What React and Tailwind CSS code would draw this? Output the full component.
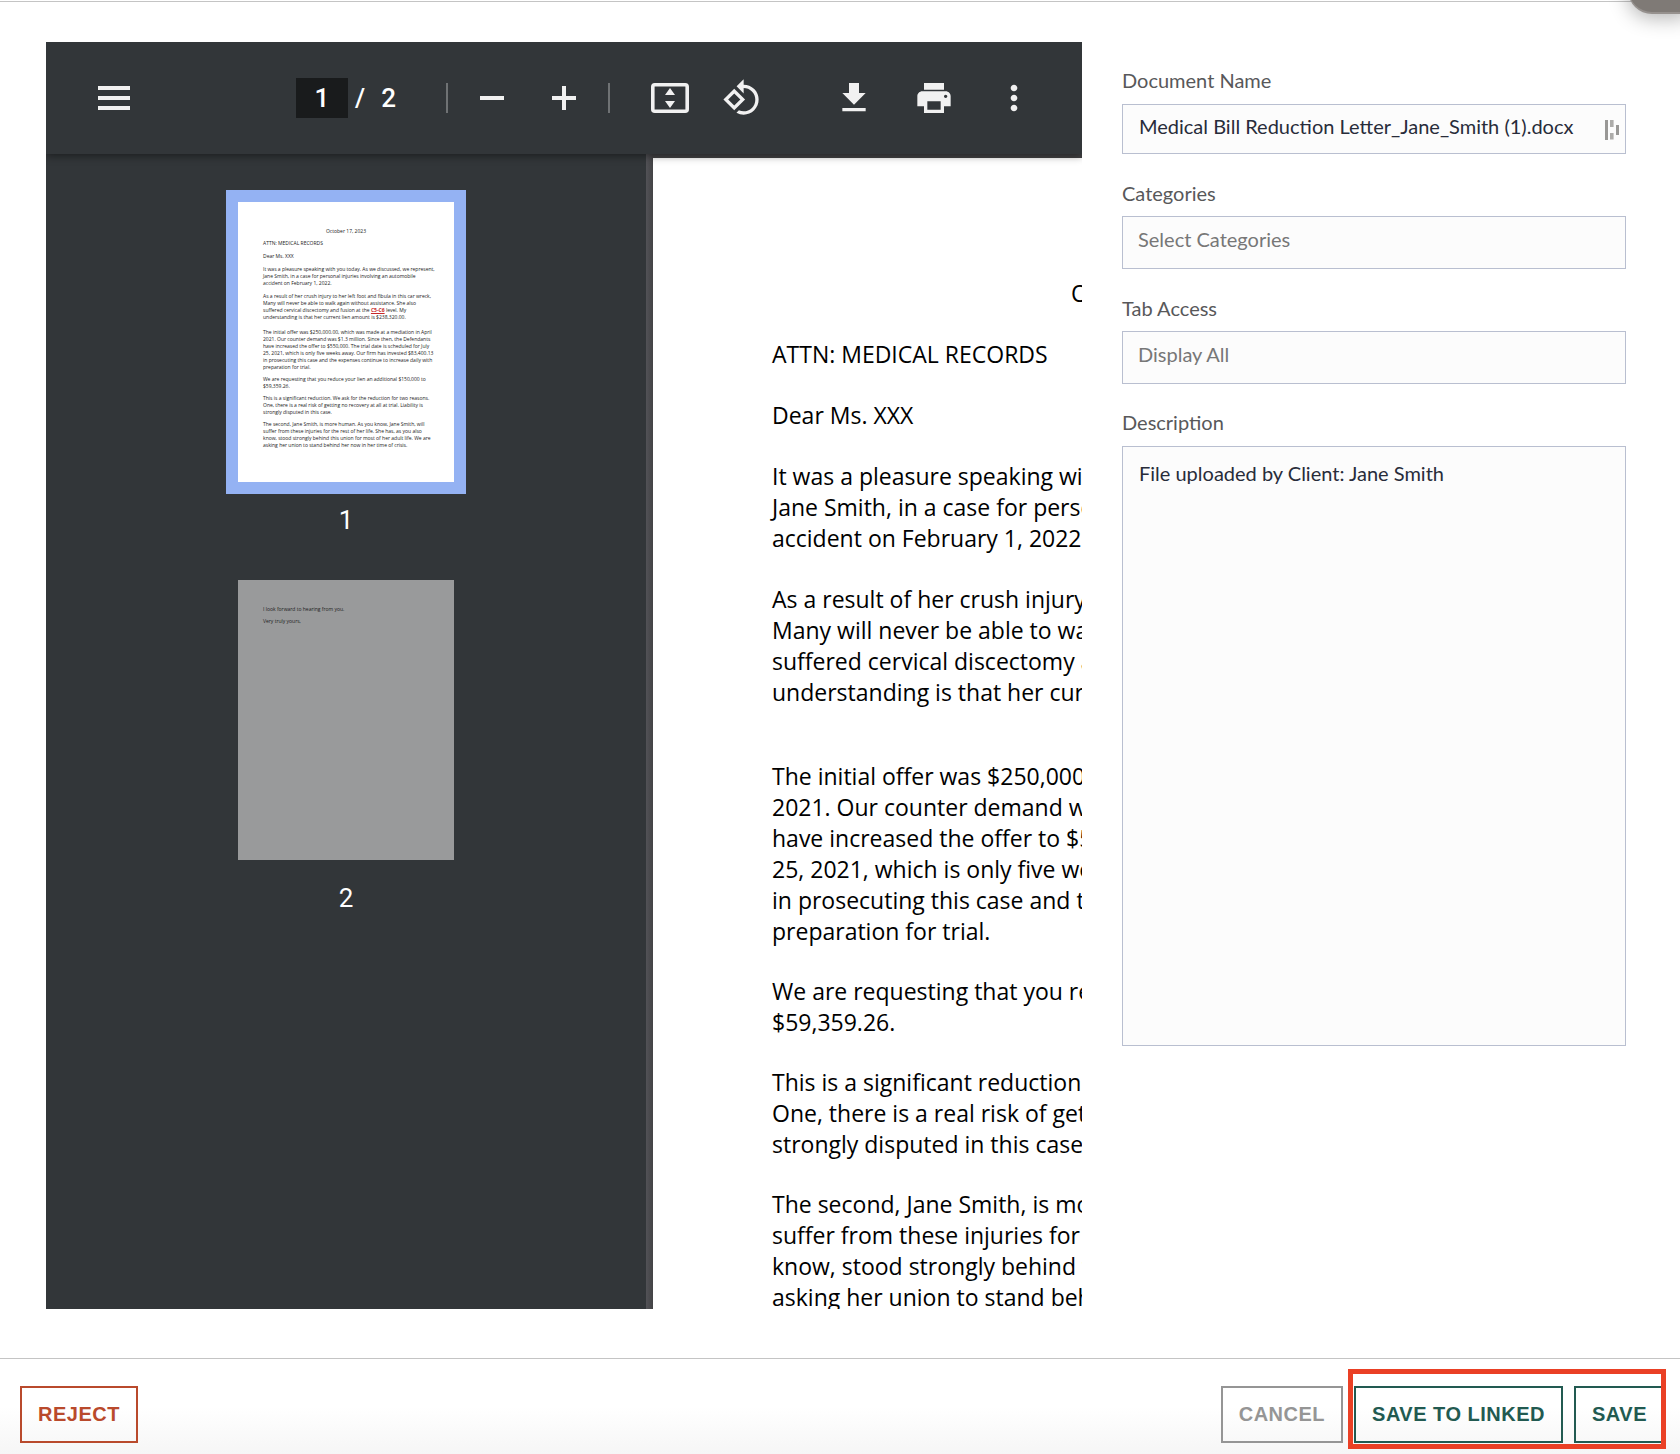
import React from "react";

const letter = [
  { lines: ["ATTN: MEDICAL RECORDS"] },
  { lines: ["Dear Ms. XXX"] },
  {
    lines: [
      "It was a pleasure speaking with you today. As we discussed, we represent,",
      "Jane Smith, in a case for personal injuries involving an automobile",
      "accident on February 1, 2022.",
    ],
  },
  {
    lines: [
      "As a result of her crush injury to her left foot and fibula in this car wreck,",
      "Many will never be able to walk again without assistance. She also",
      <>
        suffered cervical discectomy and fusion at the{" "}
        <span className="font-bold text-[#c62828] underline">C5-C6</span> level. My
      </>,
      "understanding is that her current lien amount is $238,320.00.",
    ],
    wide: true,
  },
  {
    lines: [
      "The initial offer was $250,000.00, which was made at a mediation in April",
      "2021. Our counter demand was $1.3 million. Since then, the Defendants",
      "have increased the offer to $550,000. The trial date is scheduled for July",
      "25, 2021, which is only five weeks away. Our firm has invested $83,400.13",
      "in prosecuting this case and the expenses continue to increase daily with",
      "preparation for trial.",
    ],
  },
  {
    lines: [
      "We are requesting that you reduce your lien an additional $150,000 to",
      "$59,359.26.",
    ],
  },
  {
    lines: [
      "This is a significant reduction. We ask for the reduction for two reasons.",
      "One, there is a real risk of getting no recovery at all at trial. Liability is",
      "strongly disputed in this case.",
    ],
  },
  {
    lines: [
      "The second, Jane Smith, is more human. As you know, Jane Smith, will",
      "suffer from these injuries for the rest of her life. She has, as you also",
      "know, stood strongly behind this union for most of her adult life. We are",
      "asking her union to stand behind her now in her time of crisis.",
    ],
  },
];

function Letter({ small }) {
  const openingGap = small ? "mb-[6px]" : "mb-[30px]";
  const gap = small ? "mb-[5px]" : "mb-[29px]";
  const wideGap = small ? "mb-[8px]" : "mb-[53px]";
  return (
    <div className={small ? "text-[5px] leading-[7px]" : "text-[23px] leading-[31px]"}>
      <p className={`text-center ${small ? gap : openingGap}`}>October 17, 2023</p>
      {letter.map((p, i) => (
        <p key={i} className={p.wide ? wideGap : i < 3 ? openingGap : gap}>
          {p.lines.map((line, j) => (
            <span key={j} className="block">
              {line}
            </span>
          ))}
        </p>
      ))}
    </div>
  );
}

function Icon({ d }) {
  return (
    <svg viewBox="0 0 24 24" className="size-10" fill="currentColor" aria-hidden="true">
      <path d={d} />
    </svg>
  );
}

function ToolButton({ label, children, className = "" }) {
  return (
    <button
      type="button"
      aria-label={label}
      className={`flex size-12 shrink-0 items-center justify-center ${className}`}
    >
      {children}
    </button>
  );
}

function Toolbar() {
  return (
    <div className="relative z-10 flex h-28 shrink-0 items-center bg-[#323639] pr-11 pl-11 text-[#f1f1f1] shadow-[0_2px_8px_rgba(0,0,0,0.45)]">
      <ToolButton label="Menu">
        <svg viewBox="0 0 32 24" className="h-6 w-8" fill="currentColor" aria-hidden="true">
          <path d="M0 0h32v4H0zM0 10h32v4H0zM0 20h32v4H0z" />
        </svg>
      </ToolButton>
      <div className="ml-[158px] flex items-center font-[Roboto,sans-serif] text-[26px] font-medium text-white">
        <input
          aria-label="Page"
          defaultValue="1"
          className="h-10 w-[52px] bg-[#191b1c] text-center outline-none"
        />
        <span className="ml-[7px]">/</span>
        <span className="ml-4">2</span>
      </div>
      <div className="ml-[50px] h-[30px] w-0.5 bg-[#6f7274]" />
      <ToolButton label="Zoom out" className="ml-5">
        <svg viewBox="0 0 24 24" className="size-6" fill="currentColor" aria-hidden="true">
          <path d="M0 10h24v4H0z" />
        </svg>
      </ToolButton>
      <ToolButton label="Zoom in" className="ml-6">
        <svg viewBox="0 0 24 24" className="size-6" fill="currentColor" aria-hidden="true">
          <path d="M10 0h4v10h10v4H14v10h-4V14H0v-4h10z" />
        </svg>
      </ToolButton>
      <div className="ml-5 h-[30px] w-0.5 bg-[#6f7274]" />
      <ToolButton label="Fit to page" className="ml-9">
        <svg viewBox="0 0 38 30" className="h-[30px] w-[38px]" aria-hidden="true">
          <rect x="1.8" y="1.8" width="34.4" height="26.4" rx="2" fill="none" stroke="currentColor" strokeWidth="3.6" />
          <path d="M19 5l5 7H14zM19 25l5-7H14z" fill="currentColor" />
        </svg>
      </ToolButton>
      <ToolButton label="Rotate counterclockwise" className="ml-6">
        <Icon d="M7.34 6.41L.86 12.9l6.49 6.48 6.49-6.48-6.5-6.49zM3.69 12.9l3.66-3.66L11 12.9l-3.66 3.66-3.65-3.66zm15.67-6.26C17.61 4.88 15.3 4 13 4V.76L8.76 5 13 9.24V6c1.79 0 3.58.68 4.95 2.05 2.73 2.73 2.73 7.17 0 9.9C16.58 19.32 14.79 20 13 20c-.97 0-1.94-.21-2.84-.61l-1.49 1.49C10.02 21.62 11.51 22 13 22c2.3 0 4.61-.88 6.36-2.64 3.52-3.51 3.52-9.21 0-12.72z" />
      </ToolButton>
      <div className="ml-auto flex gap-8">
        <ToolButton label="Download">
          <Icon d="M19 9h-4V3H9v6H5l7 7 7-7zM5 18v2h14v-2H5z" />
        </ToolButton>
        <ToolButton label="Print">
          <Icon d="M19 8H5c-1.66 0-3 1.34-3 3v6h4v4h12v-4h4v-6c0-1.66-1.34-3-3-3zm-3 11H8v-5h8v5zm3-7c-.55 0-1-.45-1-1s.45-1 1-1 1 .45 1 1-.45 1-1 1zm-1-9H6v4h12V3z" />
        </ToolButton>
        <ToolButton label="More actions">
          <Icon d="M12 8c1.1 0 2-.9 2-2s-.9-2-2-2-2 .9-2 2 .9 2 2 2zm0 2c-1.1 0-2 .9-2 2s.9 2 2 2 2-.9 2-2-.9-2-2-2zm0 6c-1.1 0-2 .9-2 2s.9 2 2 2 2-.9 2-2-.9-2-2-2z" />
        </ToolButton>
      </div>
    </div>
  );
}

function Viewer() {
  return (
    <section className="flex min-h-0 min-w-0 flex-col overflow-hidden bg-[#323639]">
      <Toolbar />
      <div className="flex min-h-0 flex-1">
        <aside className="flex w-[600px] shrink-0 flex-col items-center pt-9 font-[Roboto,sans-serif] text-[26px] leading-[30px] font-normal text-white">
          <button type="button" aria-label="Page 1" className="border-12 border-[#94b2f3]">
            <span className="block h-[280px] w-[216px] overflow-hidden bg-white pt-[26px] pr-[25px] pl-[25px] text-left font-['Open_Sans',sans-serif] font-normal whitespace-nowrap text-[#222]">
              <Letter small />
            </span>
          </button>
          <span className="mt-[11px]">1</span>
          <button type="button" aria-label="Page 2" className="mt-[45px]">
            <span className="block h-[280px] w-[216px] bg-[#999a9b] pt-[26px] pl-[25px] text-left font-['Open_Sans',sans-serif] text-[5px] leading-[7px] font-normal whitespace-nowrap text-[#222]">
              <span className="mb-[5px] block">I look forward to hearing from you.</span>
              <span className="block">Very truly yours,</span>
            </span>
          </button>
          <span className="mt-[23px]">2</span>
        </aside>
        <div className="min-w-0 flex-1 overflow-hidden bg-linear-to-r from-[#525257] from-0% to-[#434345] to-[7px] pt-1 pl-[7px]">
          <div className="w-[1020px] bg-white px-[119px] pt-[120px] pb-28 font-['Open_Sans',sans-serif] whitespace-nowrap text-black">
            <Letter />
          </div>
        </div>
      </div>
    </section>
  );
}

const labelClass = "block leading-6 text-[#58585a]";
const fieldClass = "block w-full border border-[#b9bfd0] bg-[#fcfcfc] outline-none";

function DetailsForm() {
  return (
    <form className="min-w-0 pt-[26px] font-[Lato,sans-serif] text-[20px]">
      <label htmlFor="doc-name" className={labelClass}>
        Document Name
      </label>
      <div className="relative mt-3">
        <input
          id="doc-name"
          defaultValue="Medical Bill Reduction Letter_Jane_Smith (1).docx"
          className={`${fieldClass} h-[50px] pr-10 pb-1.5 pl-4 text-[#282c3a]`}
        />
        <svg
          viewBox="0 0 14 20"
          className="absolute top-4 right-[7px] h-5 w-[14px]"
          fill="#999896"
          aria-hidden="true"
        >
          <path d="M0 0h3v20H0zM11 5h3v10h-3z" />
          <path d="M5 0h3.6v7H5zM5 13h3.6v6.5H5z" fill="#adacaa" />
        </svg>
      </div>

      <label htmlFor="categories" className={`${labelClass} mt-[27px]`}>
        Categories
      </label>
      <select
        id="categories"
        className={`${fieldClass} mt-[11px] h-[53px] appearance-none pr-4 pb-2 pl-[15px] text-[#777]`}
      >
        <option>Select Categories</option>
      </select>

      <label htmlFor="tab-access" className={`${labelClass} mt-[27px]`}>
        Tab Access
      </label>
      <select
        id="tab-access"
        className={`${fieldClass} mt-[11px] h-[53px] appearance-none pr-4 pb-2 pl-[15px] text-[#777]`}
      >
        <option>Display All</option>
      </select>

      <label htmlFor="description" className={`${labelClass} mt-[26px]`}>
        Description
      </label>
      <textarea
        id="description"
        defaultValue="File uploaded by Client: Jane Smith"
        className={`${fieldClass} mt-3 h-[600px] resize-none px-4 py-3 leading-7 text-[#282c3a]`}
      />
    </form>
  );
}

const buttonClass =
  "h-[57px] border-2 px-4 pb-0.5 text-[20px] font-bold tracking-wide whitespace-nowrap uppercase";

export default function App() {
  return (
    <div className="relative flex h-screen flex-col overflow-hidden bg-white">
      <div className="h-0.5 shrink-0 border-b border-[#c4c4c4]" />
      <div className="absolute -top-10 -right-2 h-[54px] w-[60px] rounded-bl-3xl border-b-2 border-l border-[#96918e] bg-[#7f7a76] shadow-[0_4px_20px_rgba(0,0,0,0.3)]" />

      <main className="grid min-h-0 flex-1 grid-cols-[1036fr_504fr] grid-rows-[minmax(0,1fr)] gap-10 pt-10 pr-[54px] pb-[49px] pl-[46px]">
        <Viewer />
        <DetailsForm />
      </main>

      <footer className="flex shrink-0 items-center border-t border-[#c4c4c4] bg-linear-to-b from-white from-50% to-[#f6f6f6] pt-[27px] pr-[15px] pb-[11px] pl-5 font-['Liberation_Sans',sans-serif]">
        <button type="button" className={`${buttonClass} border-[#b94a2c] text-[#b94a2c]`}>
          Reject
        </button>
        <button type="button" className={`${buttonClass} ml-auto border-[#959595] text-[#959595]`}>
          Cancel
        </button>
        <div className="relative ml-[11px] flex gap-[11px]">
          <button type="button" className={`${buttonClass} border-[#225a51] text-[#225a51]`}>
            Save to linked
          </button>
          <button type="button" className={`${buttonClass} border-[#225a51] text-[#225a51]`}>
            Save
          </button>
          <div className="pointer-events-none absolute -top-[17px] -right-px -bottom-[6px] -left-[6px] border-5 border-[#ea4025]" />
        </div>
      </footer>
    </div>
  );
}
